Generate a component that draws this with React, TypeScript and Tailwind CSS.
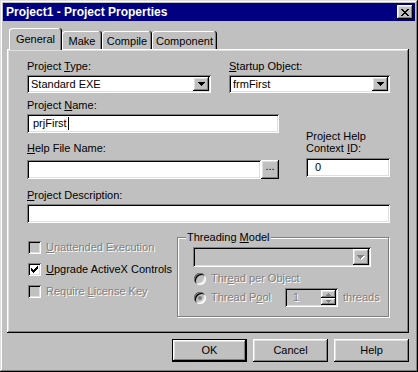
import React from 'react';

const sunken =
  'shadow-[inset_1px_1px_#808080,inset_-1px_-1px_#ffffff,inset_2px_2px_#000000,inset_-2px_-2px_#dfdfdf]';
const raised =
  'shadow-[inset_-1px_-1px_#000000,inset_1px_1px_#ffffff,inset_-2px_-2px_#808080,inset_2px_2px_#dfdfdf]';
const dim = 'text-[#808080] [text-shadow:1px_1px_0_#ffffff]';

const ARROW = ['#######', '.#####.', '..###..', '...#...'];
const UP = ['..#..', '.###.', '#####'];
const DOWN = ['#####', '.###.', '..#..'];
const CHECK = ['......#', '.....##', '#...###', '##.###.', '#####..', '.###...', '..#....'];
const CLOSE = ['##....##', '.##..##.', '..####..', '...##...', '..####..', '.##..##.', '##....##'];

// tiny pixel glyphs (arrows, check mark, close cross)
function Bitmap({ rows, color, shadow }: { rows: string[]; color: string; shadow?: string }) {
  const cells: [number, number][] = [];
  rows.forEach((r, y) => r.split('').forEach((c, x) => c === '#' && cells.push([x, y])));
  const w = rows[0].length + (shadow ? 1 : 0);
  const h = rows.length + (shadow ? 1 : 0);
  return (
    <svg width={w} height={h} shapeRendering="crispEdges" className="block">
      {shadow && cells.map(([x, y]) => <rect key={`s${x}-${y}`} x={x + 1} y={y + 1} width={1} height={1} fill={shadow} />)}
      {cells.map(([x, y]) => <rect key={`${x}-${y}`} x={x} y={y} width={1} height={1} fill={color} />)}
    </svg>
  );
}

function Combo({ value, className, disabled = false }: { value?: string; className: string; disabled?: boolean }) {
  return (
    <div className={`flex items-center pl-[4px] pr-[2px] ${sunken} ${disabled ? 'bg-[#c0c0c0]' : 'bg-white'} ${className}`}>
      <span className="flex-1 whitespace-nowrap">{value}</span>
      <div className={`w-[16px] h-[calc(100%-4px)] bg-[#c0c0c0] flex items-center justify-center ${raised}`}>
        {disabled ? <Bitmap rows={ARROW} color="#808080" shadow="#ffffff" /> : <Bitmap rows={ARROW} color="#000" />}
      </div>
    </div>
  );
}

function TextBox({ className, children }: { className: string; children?: React.ReactNode }) {
  return <div className={`flex items-center bg-white ${sunken} ${className}`}>{children}</div>;
}

function CheckBox({ label, checked = false, disabled = false }: { label: React.ReactNode; checked?: boolean; disabled?: boolean }) {
  return (
    <div className="flex items-center h-[13px]">
      <div className={`ml-[1px] w-[13px] h-[13px] flex items-center justify-center ${sunken} ${disabled ? 'bg-[#c0c0c0]' : 'bg-white'}`}>
        {checked && <Bitmap rows={CHECK} color="#000" />}
      </div>
      <span className={`ml-[5px] whitespace-nowrap ${disabled ? dim : ''}`}>{label}</span>
    </div>
  );
}

function Radio({ dot = false }: { dot?: boolean }) {
  return (
    <div className={`ml-[1px] w-[12px] h-[12px] rounded-full bg-[#c0c0c0] flex items-center justify-center ${sunken}`}>
      {dot && <div className="w-[4px] h-[4px] rounded-full bg-[#808080]" />}
    </div>
  );
}

function Button({ children, isDefault = false }: { children: React.ReactNode; isDefault?: boolean }) {
  const edge = isDefault
    ? 'shadow-[inset_0_0_0_1px_#000000,inset_-2px_-2px_#000000,inset_2px_2px_#ffffff,inset_-3px_-3px_#808080,inset_3px_3px_#dfdfdf]'
    : raised;
  return <div className={`w-[75px] h-[23px] flex items-center justify-center bg-[#c0c0c0] ${edge}`}>{children}</div>;
}

const tabEdge = 'shadow-[inset_-1px_0_#000000,inset_1px_1px_#ffffff,inset_-2px_0_#808080]';

export default function App() {
  const tabs = [
    { name: 'General', w: 'w-[53px]' },
    { name: 'Make', w: 'w-[40px]' },
    { name: 'Compile', w: 'w-[50px]' },
    { name: 'Component', w: 'w-[65px]' },
  ];

  return (
    <div className="w-[418px] h-[372px] bg-[#c0c0c0] p-[3px] flex flex-col font-['Liberation_Sans',Arial,sans-serif] text-[11px] leading-[13px] text-black shadow-[inset_-1px_-1px_#000000,inset_1px_1px_#dfdfdf,inset_-2px_-2px_#808080,inset_2px_2px_#ffffff]">
      {/* title bar */}
      <div className="h-[18px] bg-[#000080] flex items-center pl-[3px] pr-[2px]">
        <span className="text-white font-bold text-[12px] leading-[14px]">Project1 - Project Properties</span>
        <div className={`ml-auto w-[16px] h-[14px] bg-[#c0c0c0] flex items-center justify-center ${raised}`}>
          <Bitmap rows={CLOSE} color="#000" />
        </div>
      </div>

      {/* tabs */}
      <div className="mt-[7px] h-[21px] flex items-end pl-[6px]">
        {tabs.map((t, i) =>
          i === 0 ? (
            <div key={t.name} className={`relative z-10 -mb-px h-[22px] ${t.w} bg-[#c0c0c0] rounded-t-[3px] pt-[5px] text-center ${tabEdge}`}>
              {t.name}
            </div>
          ) : (
            <div key={t.name} className={`h-[18px] ${t.w} rounded-t-[3px] pt-[4px] text-center ${tabEdge}`}>
              {t.name}
            </div>
          )
        )}
      </div>

      {/* tab page */}
      <div className="ml-[4px] w-[402px] h-[284px] flex flex-col pl-[20px] pt-[11px] shadow-[inset_-1px_-1px_#000000,inset_1px_1px_#ffffff,inset_-2px_-2px_#808080,inset_2px_2px_#dfdfdf]">
        <div className="flex gap-[18px]">
          <div className="w-[184px] flex flex-col">
            <span>Project <u>T</u>ype:</span>
            <Combo value="Standard EXE" className="mt-[2px] h-[18px] w-[184px]" />
          </div>
          <div className="w-[161px] flex flex-col">
            <span><u>S</u>tartup Object:</span>
            <Combo value="frmFirst" className="mt-[2px] h-[18px] w-[161px]" />
          </div>
        </div>

        <div className="mt-[6px] flex">
          <div className="w-[252px] flex flex-col">
            <span>Project <u>N</u>ame:</span>
            <TextBox className="mt-[2px] h-[19px] w-[252px] pl-[6px]">
              <span>prjFirst</span>
              <span className="ml-[1px] w-px h-[13px] bg-black" />
            </TextBox>
            <span className="mt-[9px]"><u>H</u>elp File Name:</span>
            <div className="mt-[5px] flex">
              <TextBox className="h-[19px] w-[234px]" />
              <div className={`w-[18px] h-[19px] bg-[#c0c0c0] flex items-center justify-center pb-[6px] ${raised}`}>...</div>
            </div>
          </div>
          <div className="ml-[27px] w-[84px] flex flex-col">
            <span className="mt-[31px] leading-[12px]">
              Project Help
              <br />
              Context <u>I</u>D:
            </span>
            <TextBox className="mt-[4px] h-[19px] w-[84px] pl-[9px]">0</TextBox>
          </div>
        </div>

        <span className="mt-[10px]"><u>P</u>roject Description:</span>
        <TextBox className="mt-[2px] h-[19px] w-[363px]" />

        <div className="mt-[8px] flex">
          <div className="w-[150px] pt-[10px] flex flex-col gap-[9px]">
            <CheckBox label={<><u>U</u>nattended Execution</>} disabled />
            <CheckBox label={<><u>U</u>pgrade ActiveX Controls</>} checked />
            <CheckBox label={<>Require <u>L</u>icense Key</>} disabled />
          </div>
          <div className="relative mt-[6px] w-[212px] h-[80px] border border-[#808080] shadow-[inset_1px_1px_#ffffff,1px_1px_#ffffff] pl-[15px] pt-[9px] flex flex-col">
            <span className="absolute left-[8px] -top-[7px] px-[1px] bg-[#c0c0c0]">Threading <u>M</u>odel</span>
            <Combo className="h-[20px] w-[178px]" disabled />
            <div className="mt-[5px] h-[13px] flex items-center">
              <Radio />
              <span className={`ml-[5px] ${dim}`}>Thr<u>e</u>ad per Object</span>
            </div>
            <div className="mt-[3px] h-[19px] flex items-center">
              <Radio dot />
              <span className={`ml-[5px] w-[74px] ${dim}`}>Thread P<u>o</u>ol</span>
              <div className={`w-[53px] h-[19px] bg-[#c0c0c0] flex items-center pl-[8px] pr-[2px] ${sunken}`}>
                <span className={`flex-1 ${dim}`}>1</span>
                <div className="flex flex-col">
                  <div className={`w-[15px] h-[8px] flex items-center justify-center ${raised}`}>
                    <Bitmap rows={UP} color="#808080" />
                  </div>
                  <div className={`w-[15px] h-[7px] flex items-center justify-center ${raised}`}>
                    <Bitmap rows={DOWN} color="#808080" />
                  </div>
                </div>
              </div>
              <span className={`ml-[5px] ${dim}`}>threads</span>
            </div>
          </div>
        </div>
      </div>

      {/* dialog buttons */}
      <div className="mt-[6px] flex justify-end gap-[6px] pr-[6px]">
        <Button isDefault>OK</Button>
        <Button>Cancel</Button>
        <Button>Help</Button>
      </div>
    </div>
  );
}
